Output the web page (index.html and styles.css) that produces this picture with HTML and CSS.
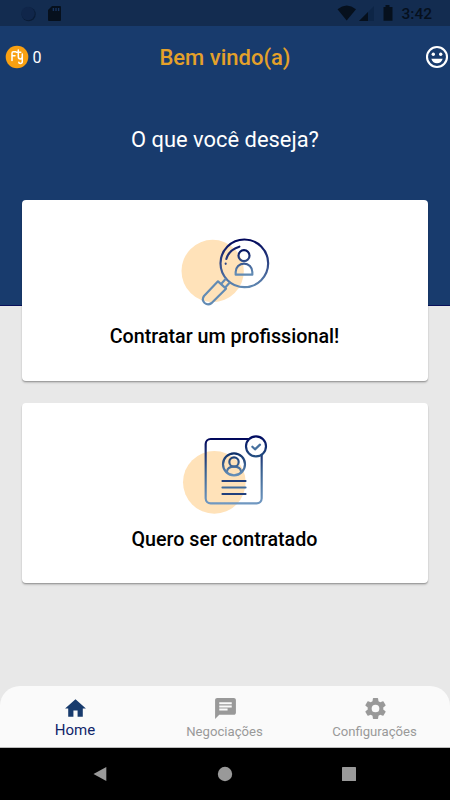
FILE: index.html
```html
<!DOCTYPE html>
<html lang="pt-BR">
<head>
<meta charset="utf-8">
<title>Bem vindo(a)</title>
<link rel="stylesheet" href="styles.css">
</head>
<body>
<div class="screen">
  <div class="status">
    <svg class="status-left" viewBox="0 0 44 18"><circle cx="8.700" cy="9.200" r="7" fill="#0a1c36"/><circle cx="8" cy="8.500" r="6.700" fill="#10264a"/><path d="M32 1h8q1 0 1 1v13q0 1-1 1H29q-1 0-1-1V5z" fill="#06101d"/><path d="M33.400 3v3M36 3v3M38.600 3v3" stroke="#17335e" stroke-width="1.400"/></svg>
    <div class="status-right">
      <svg class="signals" viewBox="0 0 58 18"><path d="M.5 5.200Q9.700-2 19 5.200L9.700 16.500z" fill="#06101d"/><path d="M37 2v15H22z" fill="#0d2546"/><path d="M31 8v9h-9z" fill="#06101d"/><path d="M48.500 1h4v2h3v13.700h-9V3h2z" fill="#06101d"/></svg>
      <span class="clock">3:42</span>
    </div>
  </div>
  <header class="appbar">
    <div class="coins">
      <svg class="coin" viewBox="0 0 24 24"><circle cx="12" cy="12" r="11.300" fill="#f9a011"/><g fill="none" stroke="#fff" stroke-width="1.500" stroke-linecap="round" stroke-linejoin="round"><path d="M7 15.500V8.200q0-1.400 1.400-1.400h2.400M7 10.800h3M13.300 5v6.500q0 2.500 2 2.500t2-2.500V9M11.300 7.300h4.500M17.300 11v5.500q0 2-2 2-1.500 0-1.500-1.200"/></g></svg>
      <span>0</span>
    </div>
    <h1>Bem vindo(a)</h1>
    <svg class="smile" viewBox="0 0 24 24"><circle cx="12" cy="12" r="10" fill="none" stroke="#fff" stroke-width="2.100"/><circle cx="8.300" cy="9.200" r="1.700" fill="#fff"/><circle cx="15.700" cy="9.200" r="1.700" fill="#fff"/><path d="M6.300 13.800h11.400Q16.200 18.300 12 18.300T6.300 13.800z" fill="#fff"/></svg>
  </header>
  <main>
    <h2>O que você deseja?</h2>
    <section class="card">
      <svg class="art art-search" viewBox="0 0 330 270">
        <defs><linearGradient id="lens" gradientUnits="userSpaceOnUse" x1="0" y1="42" x2="0" y2="190"><stop offset="0" stop-color="#00065a"/><stop offset="1" stop-color="#628bb4"/></linearGradient><linearGradient id="person" gradientUnits="userSpaceOnUse" x1="0" y1="74" x2="0" y2="144"><stop offset="0" stop-color="#00105e"/><stop offset="1" stop-color="#628bb4"/></linearGradient></defs>
        <circle cx="128" cy="138" r="93.500" fill="#ffe2b9"/>
        <g fill="none" stroke="url(#lens)" stroke-width="6.500" stroke-linecap="round" stroke-linejoin="round">
          <circle cx="223" cy="115" r="71.500"/>
          <path d="M169 102Q176 75 208 65"/>
          <path d="M167 116v.5"/>
          <g stroke="url(#person)"><circle cx="222" cy="92" r="16.500"/><path d="M197 149v-8a25 25 0 0 1 50 0v8z"/></g>
          <g stroke="#628bb4" stroke-width="6.500"><path d="M166 163l-10 11M178 174l-11 12"/><path d="M144 169l24 22-43 43q-11 8-21 0-10-10-2-21z"/></g>
        </g>
      </svg>
      <h3 class="hire">Contratar um profissional!</h3>
    </section>
    <section class="card">
      <svg class="art art-profile" viewBox="0 0 330 300">
        <defs><linearGradient id="paper" gradientUnits="userSpaceOnUse" x1="0" y1="39" x2="0" y2="238"><stop offset="0" stop-color="#00065a"/><stop offset=".5" stop-color="#3a6291"/><stop offset="1" stop-color="#7199c2"/></linearGradient><linearGradient id="face" gradientUnits="userSpaceOnUse" x1="0" y1="84" x2="0" y2="152"><stop offset="0" stop-color="#0b2d67"/><stop offset="1" stop-color="#6690b9"/></linearGradient><linearGradient id="seal" gradientUnits="userSpaceOnUse" x1="0" y1="34" x2="0" y2="95"><stop offset="0" stop-color="#000b60"/><stop offset="1" stop-color="#234e81"/></linearGradient></defs>
        <circle cx="133" cy="172" r="94" fill="#ffe2b9"/>
        <g fill="none" stroke-width="6.500" stroke-linecap="round" stroke-linejoin="round">
          <rect x="107" y="42" width="168" height="193" rx="15" stroke="url(#paper)"/>
          <g stroke="url(#face)"><circle cx="192" cy="118" r="33"/><circle cx="192" cy="111" r="14"/><path d="M171 142v-3q2-14 21-14t21 14v3"/></g>
          <path d="M157 168h70M157 207h70" stroke="#213f7c" stroke-width="5.500"/><path d="M157 187.500h70" stroke="#416d9d" stroke-width="5.500"/>
          <circle cx="258" cy="64" r="30" fill="#fff" stroke="url(#seal)"/>
          <path d="M247 65l8 8 15-14" stroke="#46709e"/>
        </g>
      </svg>
      <h3 class="hired">Quero ser contratado</h3>
    </section>
  </main>
  <nav class="tabs">
    <div class="tab active"><svg viewBox="0 0 24 24"><path d="M10 20v-6h4v6h5v-8h3L12 3 2 12h3v8z"/></svg><span>Home</span></div>
    <div class="tab"><svg viewBox="0 0 24 24"><path d="M20 2H4c-1.100 0-2 .9-2 2v18l4-4h14c1.100 0 2-.9 2-2V4c0-1.100-.9-2-2-2zM6 9h12v2H6zm8 5H6v-2h8zm4-6H6V6h12z"/></svg><span>Negociações</span></div>
    <div class="tab"><svg viewBox="0 0 24 24"><path d="M19.430 12.980c.04-.32.07-.64.07-.98s-.03-.66-.07-.98l2.110-1.650c.19-.15.24-.42.12-.64l-2-3.460c-.12-.22-.39-.3-.61-.22l-2.490 1c-.52-.4-1.080-.73-1.690-.98l-.38-2.650C14.460 2.180 14.250 2 14 2h-4c-.25 0-.46.18-.49.42l-.38 2.650c-.61.25-1.170.59-1.690.98l-2.490-1c-.23-.09-.49 0-.61.22l-2 3.460c-.13.22-.07.49.12.64l2.110 1.650c-.04.32-.07.65-.07.98s.03.66.07.98l-2.110 1.650c-.19.15-.24.42-.12.64l2 3.460c.12.22.39.3.61.22l2.490-1c.52.4 1.080.73 1.690.98l.38 2.650c.03.24.24.42.49.42h4c.25 0 .46-.18.49-.42l.38-2.650c.61-.25 1.170-.59 1.690-.98l2.490 1c.23.09.49 0 .61-.22l2-3.460c.12-.22.07-.49-.12-.64zM12 15.700a3.700 3.700 0 1 1 0-7.400 3.700 3.700 0 0 1 0 7.400z"/></svg><span>Configurações</span></div>
  </nav>
  <div class="system">
    <svg viewBox="0 0 16 16"><path d="M14.300 1v14L1.500 8z"/></svg>
    <svg viewBox="0 0 16 16"><circle cx="8" cy="8" r="7.200"/></svg>
    <svg viewBox="0 0 16 16"><rect x="1" y="1" width="14" height="14" rx=".6"/></svg>
  </div>
</div>
</body>
</html>
```

FILE: styles.css
```css
* { box-sizing: border-box; }
body { margin: 0; font-family: Roboto, sans-serif; }
h1, h2, h3 { margin: 0; white-space: nowrap; }
svg { display: block; flex: none; }

.screen {
  width: 450px;
  height: 800px;
  display: flex;
  flex-direction: column;
  overflow: hidden;
  background: linear-gradient(#183b6d 305px, #08105a 305px, #08105a 306px, #e8e8e8 306px);
}

.status {
  height: 26px;
  padding: 0 18px 0 20px;
  display: flex;
  justify-content: space-between;
  align-items: center;
  background: #132c50;
}
.status-left { width: 44px; height: 18px; margin-top: 1px; }
.status-right { display: flex; align-items: center; gap: 6px; }
.signals { width: 58px; height: 18px; }
.clock { font-size: 15.5px; font-weight: 500; line-height: 18px; color: #06101d; margin-top: 2px; }

.appbar {
  height: 62px;
  display: grid;
  grid-template-columns: 80px 1fr 80px;
  align-items: center;
  color: #fff;
}
.coins { display: flex; align-items: center; gap: 4px; padding-left: 4.5px; font-size: 16px; }
.coin { width: 24px; height: 24px; }
.appbar h1 { text-align: center; font-size: 22px; font-weight: 500; line-height: 26px; color: #e4a12a; padding-top: 2px; }
.smile { width: 24px; height: 24px; justify-self: end; margin-right: 1px; }

main { height: 598px; padding: 39px 22px 0; }
h2 { text-align: center; font-size: 21.900px; font-weight: 400; line-height: 26px; color: #fff; margin-bottom: 47px; }

.card {
  height: 180.500px;
  margin-bottom: 22px;
  display: flex;
  flex-direction: column;
  align-items: center;
  background: #fff;
  border-radius: 4px;
  box-shadow: 0 1px 1px rgba(0, 0, 0, .22), 0 2px 2px rgba(0, 0, 0, .15);
}
.art { width: 110px; }
.art-search { height: 90px; margin: 25px 1px 0 0; }
.art-profile { height: 100px; margin-top: 22.500px; }
h3 { font-size: 19.700px; font-weight: 500; line-height: 24px; color: #000; }
.hire { margin: 9.500px 1px 0 0; }
.hired { margin: 3px 1px 0 0; }

.tabs {
  height: 62px;
  display: grid;
  grid-template-columns: repeat(3, 1fr);
  background: #fafafa;
  border-radius: 20px 20px 0 0;
  border-bottom: 1px solid #bbb;
}
.tab {
  display: flex;
  flex-direction: column;
  align-items: center;
  padding-top: 9.500px;
  font-size: 13.150px;
  line-height: 16px;
  color: #999;
}
.tab svg { width: 25px; height: 25px; fill: #999; }
.tab span { margin: 3px 1px 0 0; }
.tab.active { color: #10246a; font-size: 15px; }
.tab.active svg { fill: #183b6d; }
.tab.active span { margin: 1px 0 0; }

.system {
  height: 52px;
  padding: 0 93px 0 92px;
  display: flex;
  justify-content: space-between;
  align-items: center;
  background: #000;
}
.system svg { width: 16px; height: 16px; fill: #999; }
```
